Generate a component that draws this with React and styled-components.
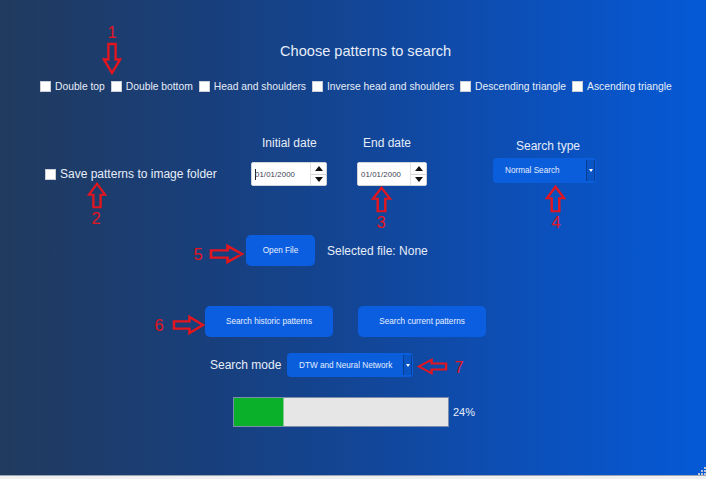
import React from 'react';
import styled, { createGlobalStyle } from 'styled-components';

const GlobalStyle = createGlobalStyle`
    html, body {
        margin: 0;
        padding: 0;
        background: #f0f0f0;
    }
    * {
        box-sizing: border-box;
    }
`;

const RED = '#e3151f';

const Window = styled.div`
    position: relative;
    width: 706px;
    height: 476px;
    display: flex;
    flex-direction: column;
    background: linear-gradient(90deg, #213a5e 0%, #183f7c 30%, #124698 52%, #0c4fb8 74%, #0559d6 100%);
    border-bottom: 1px solid #9aa6b8;
    font-family: "Liberation Sans", Arial, sans-serif;
    color: #e6edf8;
    overflow: hidden;
`;

const Title = styled.div`
    margin: 41px 0 0 280px;
    font-size: 14.6px;
    line-height: 20px;
`;

const PatternRow = styled.div`
    margin-top: 16px;
    padding-left: 40px;
    height: 18px;
    display: flex;
    align-items: center;
`;

const CheckItem = styled.label`
    display: flex;
    align-items: center;
    gap: 4px;
    margin-right: 6px;
    font-size: ${p => p.$size || 10.3}px;
    white-space: nowrap;
`;

const Box = styled.span`
    width: 11px;
    height: 11px;
    background: #ffffff;
    border: 1px solid #c9ced6;
    flex: none;
`;

const OptionsRow = styled.div`
    margin-top: 40px;
    padding-left: 45px;
    display: flex;
    align-items: flex-start;
`;

const SaveOption = styled.div`
    width: 206px;
    margin-top: 31px;
    height: 16px;
    display: flex;
    align-items: center;
`;

const Field = styled.div`
    width: ${p => p.$width}px;
    margin-left: ${p => p.$gap || 0}px;
    display: flex;
    flex-direction: column;
`;

const FieldLabel = styled.div`
    font-size: 12px;
    line-height: 16px;
    padding-left: ${p => p.$indent}px;
    margin-top: ${p => p.$top || 0}px;
    margin-bottom: ${p => p.$bottom}px;
    white-space: nowrap;
`;

const SpinBox = styled.div`
    height: 24px;
    display: flex;
    background: #ffffff;
    border: 1px solid #cfd3da;
    border-radius: 2px;
    overflow: hidden;
`;

const SpinText = styled.div`
    flex: 1;
    display: flex;
    align-items: center;
    padding-left: 3px;
    font-size: 7.8px;
    color: #3b3f55;
    letter-spacing: 0.1px;
`;

const Caret = styled.span`
    width: 1px;
    height: 11px;
    background: #222;
    margin-right: -1px;
`;

const SpinButtons = styled.div`
    width: 16px;
    display: flex;
    flex-direction: column;
    border-left: 1px solid #e2e2e2;
`;

const SpinHalf = styled.div`
    flex: 1;
    display: flex;
    align-items: center;
    justify-content: center;
    border-top: ${p => (p.$down ? '1px solid #d6d6d6' : 'none')};
`;

const Tri = styled.span`
    width: 0;
    height: 0;
    border-left: 4.5px solid transparent;
    border-right: 4.5px solid transparent;
    ${p => (p.$down ? 'border-top: 5px solid #111;' : 'border-bottom: 5px solid #111;')}
`;

const Combo = styled.div`
    width: ${p => p.$width}px;
    height: ${p => p.$height}px;
    display: flex;
    align-items: center;
    background: #0b5edb;
    border-radius: 4px;
    font-size: 8.2px;
    color: #e4edff;
    padding-left: ${p => p.$pad}px;
`;

const ComboText = styled.span`
    flex: 1;
`;

const DropButton = styled.span`
    width: 9px;
    align-self: stretch;
    margin: 2px 1px 2px 0;
    display: flex;
    align-items: center;
    justify-content: center;
    background: #0a55c6;
    border-left: 1px solid #083f92;
    border-right: 1px solid #083f92;

    &::after {
        content: '';
        border-left: 2.5px solid transparent;
        border-right: 2.5px solid transparent;
        border-top: 3px solid #ffffff;
    }
`;

const FileRow = styled.div`
    margin-top: 49px;
    padding-left: 246px;
    display: flex;
    align-items: center;
`;

const Button = styled.div`
    width: ${p => p.$width}px;
    height: 31px;
    display: flex;
    align-items: center;
    justify-content: center;
    background: #0b5ee0;
    border-radius: 5px;
    font-size: 8.2px;
    color: #e8f0ff;
`;

const FileLabel = styled.div`
    margin-left: 12px;
    font-size: 12px;
`;

const SearchRow = styled.div`
    margin-top: 40px;
    padding-left: 205px;
    display: flex;
    gap: 25px;
`;

const ModeRow = styled.div`
    margin-top: 16px;
    padding-left: 210px;
    display: flex;
    align-items: center;
`;

const ModeLabel = styled.div`
    width: 77px;
    font-size: 12px;
`;

const ProgressRow = styled.div`
    margin-top: 20px;
    padding-left: 233px;
    display: flex;
    align-items: center;
`;

const Track = styled.div`
    width: 216px;
    height: 30px;
    background: #e6e6e6;
    border: 1px solid #7b8dab;
    display: flex;
`;

const Fill = styled.div`
    height: 100%;
    background: #0ab02a;
    border-right: 1px solid #86c98f;
`;

const Percent = styled.div`
    margin-left: 4px;
    font-size: 11px;
`;

const Num = styled.span`
    position: absolute;
    left: ${p => p.$x}px;
    top: ${p => p.$y}px;
    transform: translate(-50%, -50%);
    font-size: 16.5px;
    line-height: 1;
    color: ${RED};
`;

const ArrowSvg = styled.svg`
    position: absolute;
    left: ${p => p.$x}px;
    top: ${p => p.$y}px;
    overflow: visible;
`;

const arrowShapes = {
    down: { vb: '0 0 20 32', pts: '6,1 14,1 14,17 19,17 10,31 1,17 6,17' },
    up: { vb: '0 0 20 32', pts: '6,31 14,31 14,15 19,15 10,1 1,15 6,15' },
    right: { vb: '0 0 32 20', pts: '1,6 17,6 17,1 31,10 17,19 17,14 1,14' },
    left: { vb: '0 0 32 20', pts: '31,6 15,6 15,1 1,10 15,19 15,14 31,14' },
};

const Arrow = ({ dir, x, y, w, h }) => (
    <ArrowSvg $x={x} $y={y} width={w} height={h} viewBox={arrowShapes[dir].vb} preserveAspectRatio="none">
        <polygon points={arrowShapes[dir].pts} fill="none" stroke={RED} strokeWidth="2.6" strokeLinejoin="miter" />
    </ArrowSvg>
);

const Grip = styled.svg`
    position: absolute;
    right: 0;
    bottom: 0;
`;

const patterns = [
    'Double top',
    'Double bottom',
    'Head and shoulders',
    'Inverse head and shoulders',
    'Descending triangle',
    'Ascending triangle',
];

const DateField = ({ label, width, gap, indent, caret }) => (
    <Field $width={width} $gap={gap}>
        <FieldLabel $indent={indent} $bottom={11}>{label}</FieldLabel>
        <SpinBox>
            <SpinText>
                {caret && <Caret />}
                01/01/2000
            </SpinText>
            <SpinButtons>
                <SpinHalf><Tri /></SpinHalf>
                <SpinHalf $down><Tri $down /></SpinHalf>
            </SpinButtons>
        </SpinBox>
    </Field>
);

const App = () => {
    const progress = 24;

    return (
        <Window>
            <GlobalStyle />
            <Title>Choose patterns to search</Title>

            <PatternRow>
                {patterns.map(p => (
                    <CheckItem key={p}>
                        <Box />
                        {p}
                    </CheckItem>
                ))}
            </PatternRow>

            <OptionsRow>
                <SaveOption>
                    <CheckItem $size={12}>
                        <Box />
                        Save patterns to image folder
                    </CheckItem>
                </SaveOption>

                <DateField label="Initial date" width={76} indent={11} caret />
                <DateField label="End date" width={70} gap={30} indent={6} />

                <Field $width={103} $gap={66}>
                    <FieldLabel $indent={23} $top={3} $bottom={4}>Search type</FieldLabel>
                    <Combo $width={103} $height={25} $pad={12}>
                        <ComboText>Normal Search</ComboText>
                        <DropButton />
                    </Combo>
                </Field>
            </OptionsRow>

            <FileRow>
                <Button $width={69}>Open File</Button>
                <FileLabel>Selected file: None</FileLabel>
            </FileRow>

            <SearchRow>
                <Button $width={128}>Search historic patterns</Button>
                <Button $width={128}>Search current patterns</Button>
            </SearchRow>

            <ModeRow>
                <ModeLabel>Search mode</ModeLabel>
                <Combo $width={126} $height={24} $pad={12}>
                    <ComboText>DTW and Neural Network</ComboText>
                    <DropButton />
                </Combo>
            </ModeRow>

            <ProgressRow>
                <Track>
                    <Fill style={{ width: `${progress * 214 / 100 - 1}px` }} />
                </Track>
                <Percent>{progress}%</Percent>
            </ProgressRow>

            {/* red annotations drawn over the window */}
            <Num $x={112} $y={32}>1</Num>
            <Arrow dir="down" x={103} y={43} w={18} h={31} />

            <Arrow dir="up" x={88} y={183} w={18} h={25} />
            <Num $x={96} $y={218}>2</Num>

            <Arrow dir="up" x={372} y={187} w={19} h={25} />
            <Num $x={381} $y={222}>3</Num>

            <Arrow dir="up" x={546} y={186} w={19} h={26} />
            <Num $x={556} $y={222}>4</Num>

            <Num $x={198} $y={254}>5</Num>
            <Arrow dir="right" x={210} y={245} w={33} h={18} />

            <Num $x={159} $y={325}>6</Num>
            <Arrow dir="right" x={173} y={316} w={31} h={18} />

            <Arrow dir="left" x={418} y={359} w={29} h={15} />
            <Num $x={459} $y={367}>7</Num>

            <Grip width="9" height="9" viewBox="0 0 9 9">
                <g fill="#b9c3d2">
                    <rect x="7" y="1" width="2" height="2" />
                    <rect x="4" y="4" width="2" height="2" />
                    <rect x="7" y="4" width="2" height="2" />
                    <rect x="1" y="7" width="2" height="2" />
                    <rect x="4" y="7" width="2" height="2" />
                    <rect x="7" y="7" width="2" height="2" />
                </g>
            </Grip>
        </Window>
    );
};

export default App;
